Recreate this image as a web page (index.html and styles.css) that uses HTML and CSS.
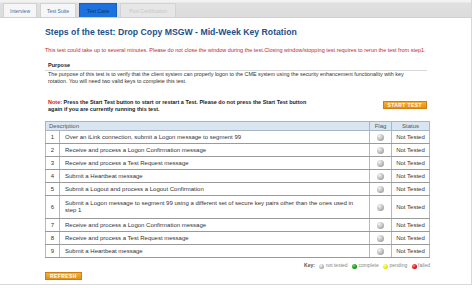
FILE: index.html
```html
<!DOCTYPE html>
<html lang="en">
<head>
    <meta charset="UTF-8">
    <title>Test Case - Drop Copy MSGW</title>
    <link rel="stylesheet" href="styles.css">
</head>
<body>

    <div class="page">
        <div class="tabs">
            <span class="tab">Interview</span>
            <span class="tab">Test Suite</span>
            <span class="tab active">Test Case</span>
            <span class="tab disabled">Post Certification</span>
        </div>

        <div class="content">
            <h1 class="title">Steps of the test: Drop Copy MSGW - Mid-Week Key Rotation</h1>

            <p class="warning">This test could take up to several minutes. Please do not close the window during the test.Closing window/stopping test requires to rerun the test from step1.</p>

            <div class="purpose">
                <div class="purpose-head">Purpose</div>
                <p>The purpose of this test is to verify that the client system can properly logon to the CME system using the security enhancement functionality with key rotation. You will need two valid keys to complete this test.</p>
            </div>

            <div class="note-row">
                <p class="note"><span class="red">Note:</span> Press the Start Test button to start or restart a Test. Please do not press the Start Test button again if you are currently running this test.</p>
                <button class="btn">START TEST</button>
            </div>

            <table class="steps">
                <tr>
                    <th colspan="2" class="desc-head">Description</th>
                    <th class="flag">Flag</th>
                    <th class="status">Status</th>
                </tr>
                <tr><td class="num">1</td><td>Over an iLink connection, submit a Logon message to segment 99</td><td class="flag"><span class="ball"></span></td><td class="status">Not Tested</td></tr>
                <tr><td class="num">2</td><td>Receive and process a Logon Confirmation message</td><td class="flag"><span class="ball"></span></td><td class="status">Not Tested</td></tr>
                <tr><td class="num">3</td><td>Receive and process a Test Request message</td><td class="flag"><span class="ball"></span></td><td class="status">Not Tested</td></tr>
                <tr><td class="num">4</td><td>Submit a Heartbeat message</td><td class="flag"><span class="ball"></span></td><td class="status">Not Tested</td></tr>
                <tr><td class="num">5</td><td>Submit a Logout and process a Logout Confirmation</td><td class="flag"><span class="ball"></span></td><td class="status">Not Tested</td></tr>
                <tr class="tall"><td class="num">6</td><td>Submit a Logon message to segment 99 using a different set of secure key pairs other than the ones used in step 1</td><td class="flag"><span class="ball"></span></td><td class="status">Not Tested</td></tr>
                <tr><td class="num">7</td><td>Receive and process a Logon Confirmation message</td><td class="flag"><span class="ball"></span></td><td class="status">Not Tested</td></tr>
                <tr><td class="num">8</td><td>Receive and process a Test Request message</td><td class="flag"><span class="ball"></span></td><td class="status">Not Tested</td></tr>
                <tr><td class="num">9</td><td>Submit a Heartbeat message</td><td class="flag"><span class="ball"></span></td><td class="status">Not Tested</td></tr>
            </table>

            <div class="key">
                <b>Key:</b>
                <span class="ball small"></span> not tested
                <span class="ball small green"></span> complete
                <span class="ball small yellow"></span> pending
                <span class="ball small red-ball"></span> failed
            </div>

            <button class="btn refresh">REFRESH</button>
        </div>
    </div>

</body>
</html>
```

FILE: styles.css
```css
body {
    margin: 0;
    font-family: "Liberation Sans", Arial, sans-serif;
    background: #fff;
    color: #222;
}
.page {
    width: 472px;
    height: 285px;
    border-right: 1px solid #d8d8d8;
    border-bottom: 1px solid #d8d8d8;
    box-sizing: border-box;
}
.tabs {
    height: 18px;
    background: linear-gradient(#f2f2f2 0, #f2f2f2 2px, #e0e0e0 3px, #dcdcdc 100%);
    border-bottom: 1px solid #d0d0d0;
    display: flex;
    align-items: flex-end;
    gap: 3px;
    padding-left: 3px;
    box-sizing: border-box;
}
.tab {
    height: 14px;
    line-height: 14px;
    padding: 0 6px;
    font-size: 5px;
    color: #3c6ea8;
    background: #f6f6f6;
    border: 1px solid #d2d2d2;
    border-bottom: none;
    box-sizing: border-box;
}
.tab.active {
    background: #1b72de;
    border-color: #1560c0;
    color: #10335e;
    padding: 0 7px;
}
.tab.disabled {
    background: #e6e6e6;
    color: #c8c8c8;
    padding: 0 8px;
}
.content {
    padding-left: 45px;
    width: 385px;
}
.title {
    margin: 8px 0 0;
    font-size: 8.7px;
    line-height: 12px;
    color: #1c4f8c;
}
.warning {
    margin: 9px 0 0;
    font-size: 5.5px;
    line-height: 7px;
    color: #c3282e;
}
.purpose {
    margin-top: 8px;
    width: 382px;
}
.purpose-head {
    font-size: 5.5px;
    font-weight: bold;
    line-height: 7px;
    padding-left: 3px;
    border-bottom: 1px solid #d8d8d8;
    padding-bottom: 1px;
}
.purpose p {
    margin: 0;
    padding: 0 16px 0 3px;
    font-size: 5.4px;
    line-height: 7px;
    color: #333;
}
.note-row {
    margin-top: 14px;
    display: flex;
    justify-content: space-between;
    align-items: flex-start;
    width: 382px;
}
.note {
    margin: 0;
    padding-left: 3px;
    width: 264px;
    font-size: 5.5px;
    font-weight: bold;
    line-height: 7.2px;
}
.red {
    color: #d0202a;
}
.btn {
    font-family: "Liberation Sans", Arial, sans-serif;
    font-size: 5px;
    font-weight: bold;
    letter-spacing: 0.4px;
    color: #fff;
    background: linear-gradient(#f6b13c, #e48e14);
    border: 1px solid #cf7d10;
    height: 8px;
    line-height: 6px;
    padding: 0 4px;
    margin-top: 2px;
}
.btn.refresh {
    display: block;
    margin-top: 3px;
}
.steps {
    margin-top: 8px;
    width: 385px;
    border-collapse: collapse;
    font-size: 6px;
    color: #333;
}
.steps th {
    background: #d9e6f2;
    font-weight: normal;
    color: #555;
    height: 8px;
    padding: 0;
    border: 1px solid #a8b6c4;
}
.steps th.desc-head {
    text-align: left;
    padding-left: 3px;
}
.steps td {
    height: 12px;
    padding: 0 14px 0 5px;
    line-height: 7px;
    border: 1px solid #9a9a9a;
    border-left-color: #b8b8b8;
    border-right-color: #b8b8b8;
}
.steps tr.tall td {
    height: 22px;
}
.steps td.num {
    width: 13px;
    text-align: center;
    padding: 0;
}
.steps .flag {
    width: 21px;
    text-align: center;
    padding: 0;
}
.steps .status {
    width: 37px;
    text-align: center;
    padding: 0;
}
.ball {
    display: inline-block;
    width: 7px;
    height: 7px;
    border-radius: 50%;
    background: radial-gradient(circle at 35% 30%, #f4f4f4, #b4b4b4 60%, #8c8c8c);
    vertical-align: middle;
}
.ball.small {
    width: 5px;
    height: 5px;
    margin-left: 3px;
}
.ball.green {
    background: radial-gradient(circle at 35% 30%, #6fd26f, #0a8a0a 70%);
}
.ball.yellow {
    background: radial-gradient(circle at 35% 30%, #ffff90, #e2e200 70%);
}
.ball.red-ball {
    background: radial-gradient(circle at 35% 30%, #ff8080, #d40000 70%);
}
.key {
    margin-top: 4px;
    text-align: right;
    font-size: 5px;
    line-height: 7px;
    color: #888;
}
.key b {
    color: #555;
}
```
